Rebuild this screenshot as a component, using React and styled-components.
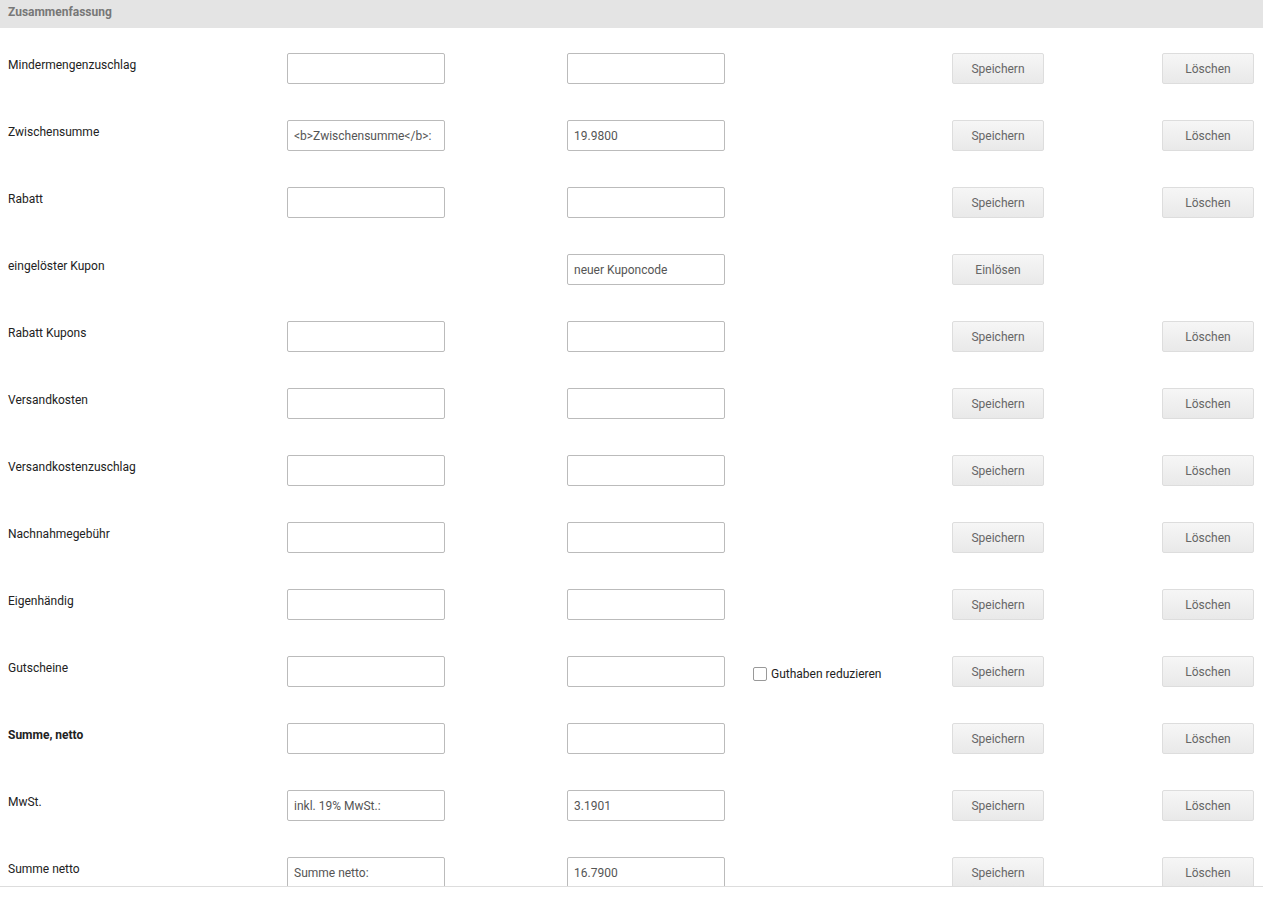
import styled, { createGlobalStyle } from "styled-components";

const GlobalStyle = createGlobalStyle`
  body {
    margin: 0;
    background: #ffffff;
    font-family: Roboto, "Liberation Sans", Arial, sans-serif;
  }
`;

const Panel = styled.div`
  height: 887px;
  overflow: hidden;
  border-bottom: 1px solid #dddddd;
  box-sizing: border-box;
`;

const PanelHeader = styled.div`
  height: 28px;
  box-sizing: border-box;
  padding: 4px 8px;
  background: #e4e4e4;
  color: #777777;
  font-size: 12px;
  line-height: 17px;
  font-weight: bold;
`;

const Row = styled.div`
  display: grid;
  grid-template-columns: 279px 280px 186px 199px 210px 92px;
  align-items: start;
  height: 67px;
  box-sizing: border-box;
  padding: 25px 0 0 8px;
`;

const Label = styled.div`
  margin-top: 4px;
  font-size: 12px;
  line-height: 17px;
  color: #222222;
  font-weight: ${(p) => (p.$bold ? "bold" : "normal")};
`;

const Input = styled.input`
  width: 158px;
  height: 31px;
  box-sizing: border-box;
  border: 1px solid #bbbbbb;
  border-radius: 2px;
  padding: 0 6px;
  font-family: Roboto, "Liberation Sans", Arial, sans-serif;
  font-size: 12px;
  color: #555555;
  background: #ffffff;
  outline: none;

  &::placeholder {
    color: #555555;
  }
`;

const Empty = styled.div``;

const Button = styled.button`
  width: 92px;
  height: 31px;
  box-sizing: border-box;
  border: 1px solid #dddddd;
  border-radius: 2px;
  background: linear-gradient(to bottom, #f6f6f6, #e9e9e9);
  color: #666666;
  font-family: Roboto, "Liberation Sans", Arial, sans-serif;
  font-size: 12px;
  cursor: pointer;
  padding: 0;
`;

const CheckLabel = styled.label`
  display: flex;
  align-items: center;
  gap: 4px;
  height: 31px;
  margin-top: 2px;
  font-size: 12px;
  color: #222222;
`;

const Box = styled.span`
  width: 12px;
  height: 12px;
  border: 1px solid #999999;
  border-radius: 2px;
  background: #ffffff;
`;

const rows = [
  { label: "Mindermengenzuschlag" },
  { label: "Zwischensumme", a: "<b>Zwischensumme</b>:", b: "19.9800" },
  { label: "Rabatt" },
  { label: "eingelöster Kupon", coupon: true },
  { label: "Rabatt Kupons" },
  { label: "Versandkosten" },
  { label: "Versandkostenzuschlag" },
  { label: "Nachnahmegebühr" },
  { label: "Eigenhändig" },
  { label: "Gutscheine", check: true },
  { label: "Summe, netto", bold: true },
  { label: "MwSt.", a: "inkl. 19% MwSt.:", b: "3.1901" },
  { label: "Summe netto", a: "Summe netto:", b: "16.7900" },
];

const SummaryRow = ({ row }) => {
  if (row.coupon) {
    return (
      <Row>
        <Label>{row.label}</Label>
        <Empty />
        <Input placeholder="neuer Kuponcode" />
        <Empty />
        <Button>Einlösen</Button>
        <Empty />
      </Row>
    );
  }
  return (
    <Row>
      <Label $bold={row.bold}>{row.label}</Label>
      <Input defaultValue={row.a || ""} />
      <Input defaultValue={row.b || ""} />
      {row.check ? (
        <CheckLabel>
          <Box />
          Guthaben reduzieren
        </CheckLabel>
      ) : (
        <Empty />
      )}
      <Button>Speichern</Button>
      <Button>Löschen</Button>
    </Row>
  );
};

export default function App() {
  return (
    <>
      <GlobalStyle />
      <Panel>
        <PanelHeader>Zusammenfassung</PanelHeader>
        {rows.map((row) => (
          <SummaryRow key={row.label} row={row} />
        ))}
      </Panel>
    </>
  );
}
